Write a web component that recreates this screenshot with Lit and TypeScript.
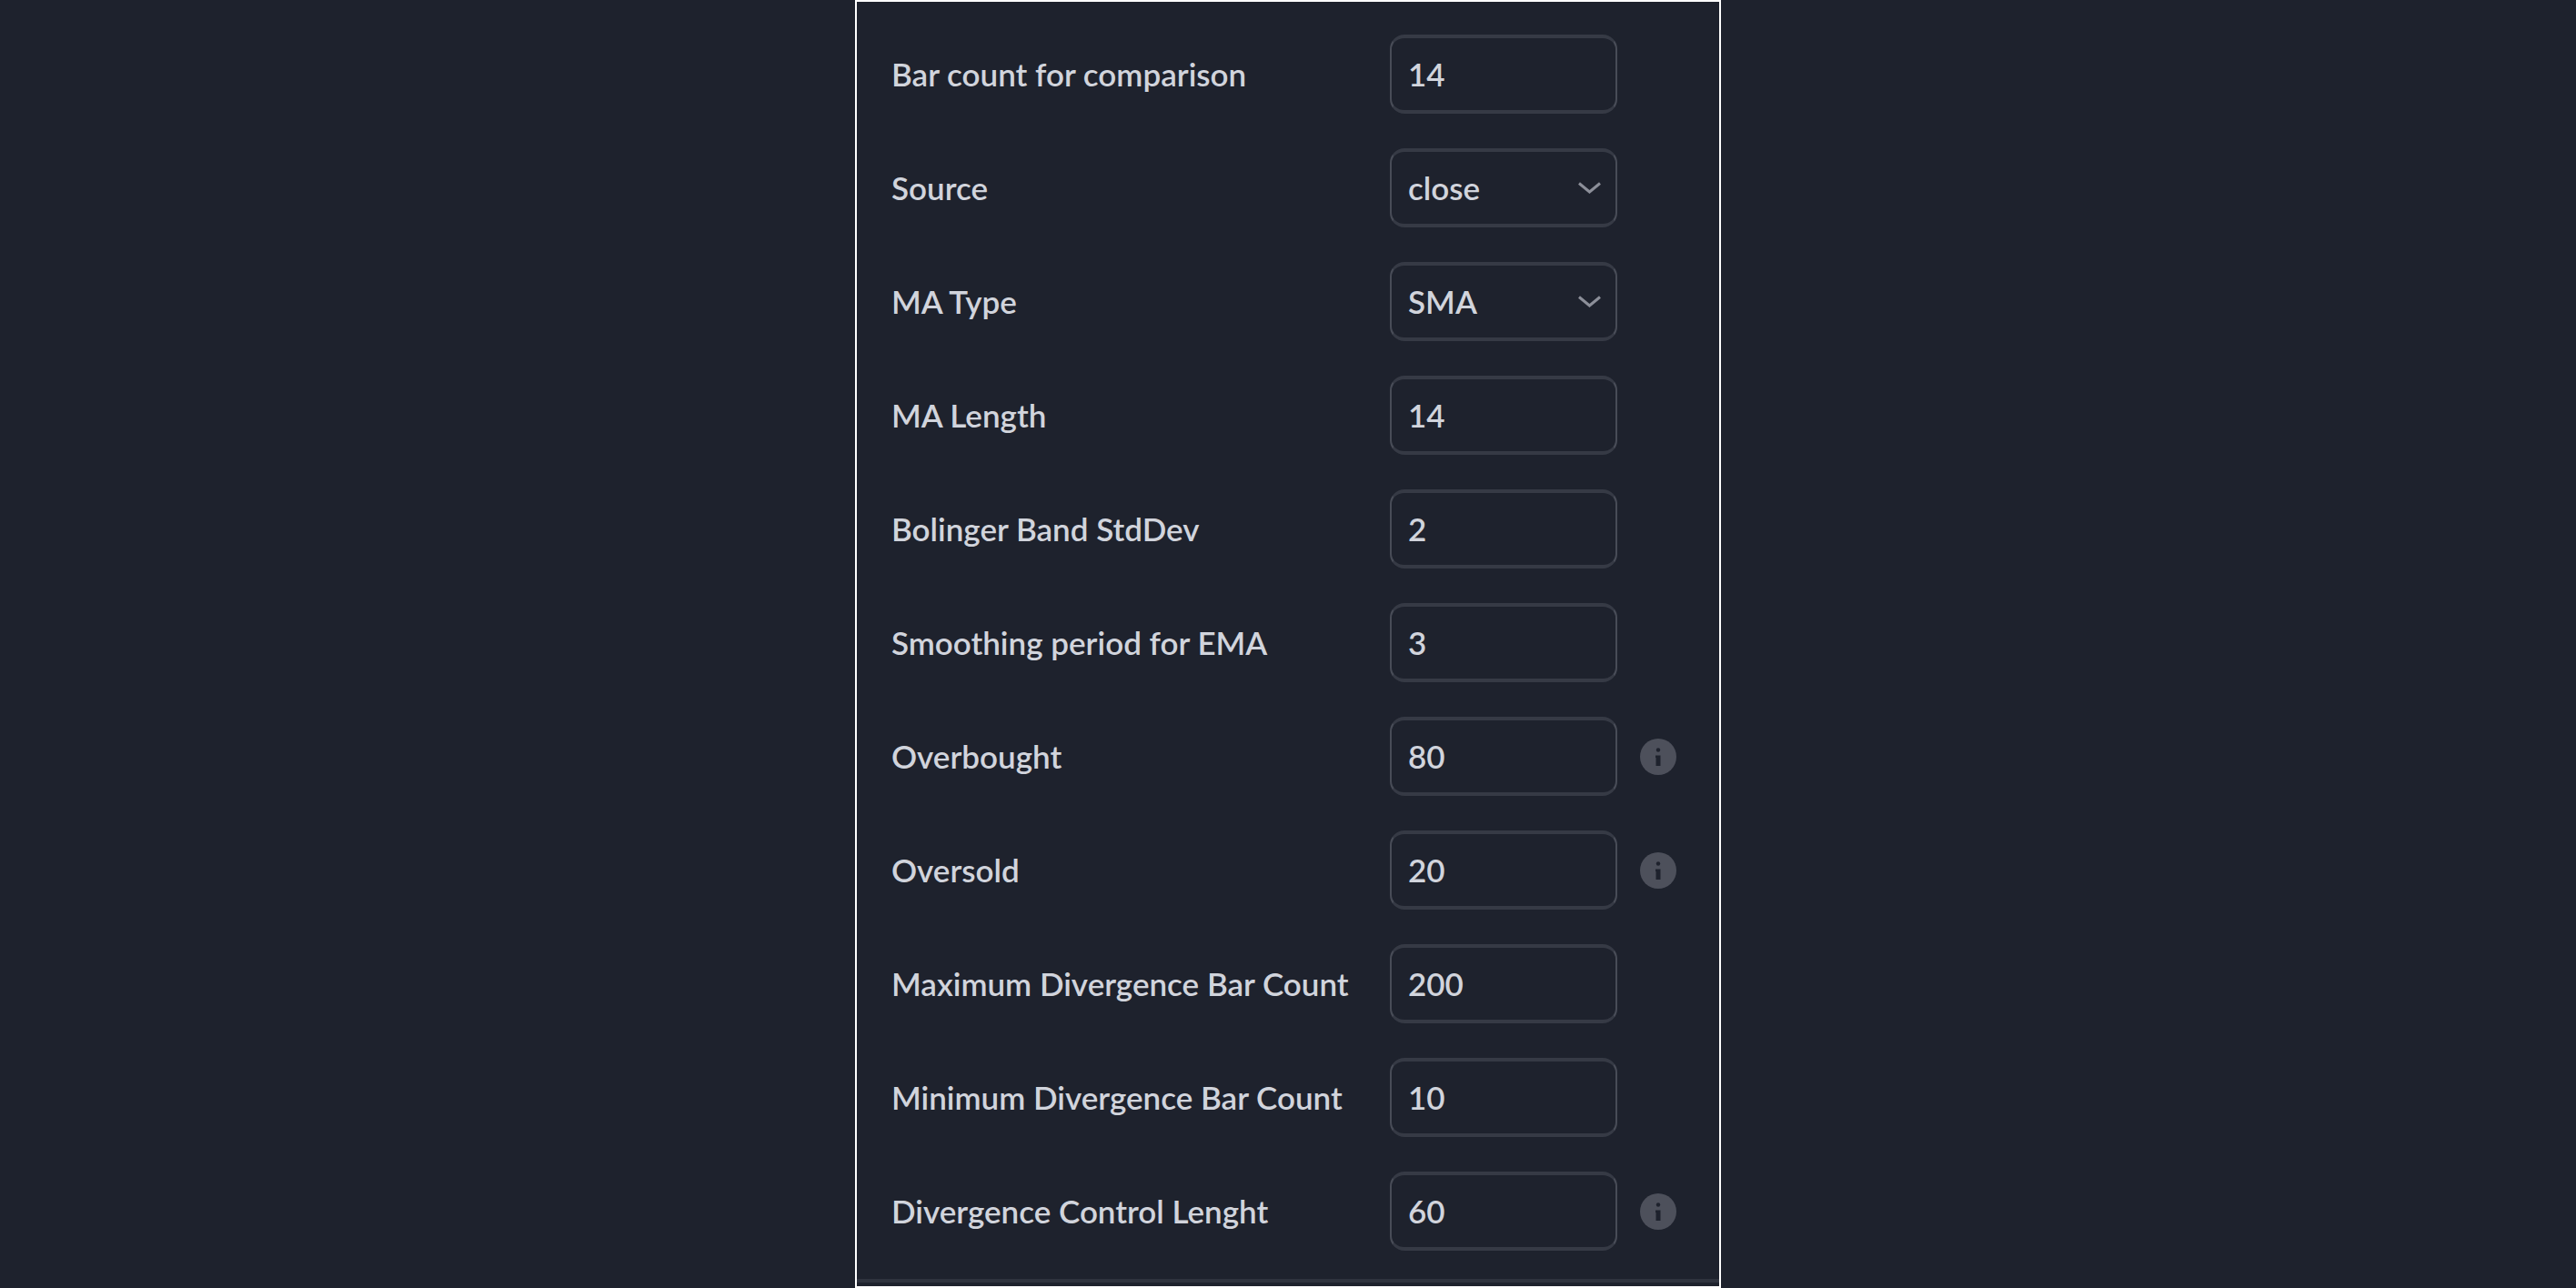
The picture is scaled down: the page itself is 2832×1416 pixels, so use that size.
import { LitElement, html, css, nothing } from "lit";
import { customElement, property } from "lit/decorators.js";

interface Field {
  id: string;
  label: string;
  value: string;
  options?: string[];
  info?: boolean;
}

const FIELDS: Field[] = [
  { id: "bar-count", label: "Bar count for comparison", value: "14" },
  { id: "source", label: "Source", value: "close", options: ["open", "high", "low", "close"] },
  { id: "ma-type", label: "MA Type", value: "SMA", options: ["SMA", "EMA", "WMA"] },
  { id: "ma-length", label: "MA Length", value: "14" },
  { id: "std-dev", label: "Bolinger Band StdDev", value: "2" },
  { id: "ema-period", label: "Smoothing period for EMA", value: "3" },
  { id: "overbought", label: "Overbought", value: "80", info: true },
  { id: "oversold", label: "Oversold", value: "20", info: true },
  { id: "max-bars", label: "Maximum Divergence Bar Count", value: "200" },
  { id: "min-bars", label: "Minimum Divergence Bar Count", value: "10" },
  { id: "control-length", label: "Divergence Control Lenght", value: "60", info: true },
];

@customElement("setting-row")
export class SettingRow extends LitElement {
  @property({ attribute: false }) field!: Field;

  static styles = css`
    :host {
      display: grid;
      grid-template-columns: minmax(0, 1fr) 250px 63px;
      align-items: center;
      column-gap: 25px;
    }
    .label {
      padding-bottom: 2px;
      white-space: nowrap;
      line-height: 44px;
    }
    .box {
      display: grid;
      align-items: center;
    }
    .control {
      grid-area: 1 / 1;
      box-sizing: border-box;
      width: 100%;
      height: 87px;
      margin: 0;
      padding: 0 18px 2px;
      border: solid;
      border-width: 4px 2px;
      border-color: #363a45 #484c57;
      border-radius: 16px;
      outline: none;
      background: transparent;
      color: inherit;
      font: inherit;
      appearance: none;
    }
    .control:focus-visible {
      border-color: #2962ff;
    }
    .option {
      background: #1e222d;
    }
    .chevron {
      grid-area: 1 / 1;
      justify-self: end;
      width: 26px;
      height: 14px;
      margin-right: 18px;
      pointer-events: none;
    }
    .info {
      display: block;
      width: 40px;
      height: 40px;
      padding: 0;
      border: 0;
      border-radius: 50%;
      background: none;
      cursor: pointer;
    }
    .info-icon {
      display: block;
      width: 40px;
      height: 40px;
    }
  `;

  private renderControl(f: Field) {
    if (!f.options) {
      return html`<input class="control" id=${f.id} type="text" inputmode="numeric" .value=${f.value} />`;
    }
    return html`
      <select class="control" id=${f.id}>
        ${f.options.map(
          (o) => html`<option class="option" value=${o} ?selected=${o === f.value}>${o}</option>`
        )}
      </select>
      <svg class="chevron" viewBox="0 0 26 14" aria-hidden="true">
        <path d="M2 1.5 L13.5 11 L25 1.5" fill="none" stroke="#8c8f99" stroke-width="3" />
      </svg>
    `;
  }

  render() {
    const f = this.field;
    return html`
      <label class="label" for=${f.id}>${f.label}</label>
      <div class="box">${this.renderControl(f)}</div>
      ${f.info
        ? html`<button class="info" type="button" aria-label="About ${f.label}">
            <svg class="info-icon" viewBox="0 0 40 40" aria-hidden="true">
              <circle cx="20" cy="20" r="20" fill="#4d505b" />
              <circle cx="20" cy="12.5" r="2.2" fill="#1e222d" />
              <path d="M17 18.5 H22.5 V30 H17.5 V21 H17 Z" fill="#1e222d" />
            </svg>
          </button>`
        : nothing}
    `;
  }
}

@customElement("app-root")
export class AppRoot extends LitElement {
  static styles = css`
    :host {
      display: flex;
      justify-content: center;
      min-height: 100vh;
      background: #1e222d;
      color: #d1d4dc;
      font: 600 35px/44px Lato, "Liberation Sans", sans-serif;
    }
    .panel {
      box-sizing: border-box;
      display: flex;
      flex-direction: column;
      width: 100%;
      max-width: 952px;
      border: 2px solid #fff;
      padding-bottom: 4px;
    }
    .rows {
      display: flex;
      flex: 1;
      flex-direction: column;
      gap: 38px;
      padding: 36px 24px 31px 38px;
      border-bottom: 4px solid #2f333e;
    }
  `;

  render() {
    return html`
      <form class="panel" @submit=${(e: Event) => e.preventDefault()}>
        <div class="rows">${FIELDS.map((f) => html`<setting-row .field=${f}></setting-row>`)}</div>
      </form>
    `;
  }
}
